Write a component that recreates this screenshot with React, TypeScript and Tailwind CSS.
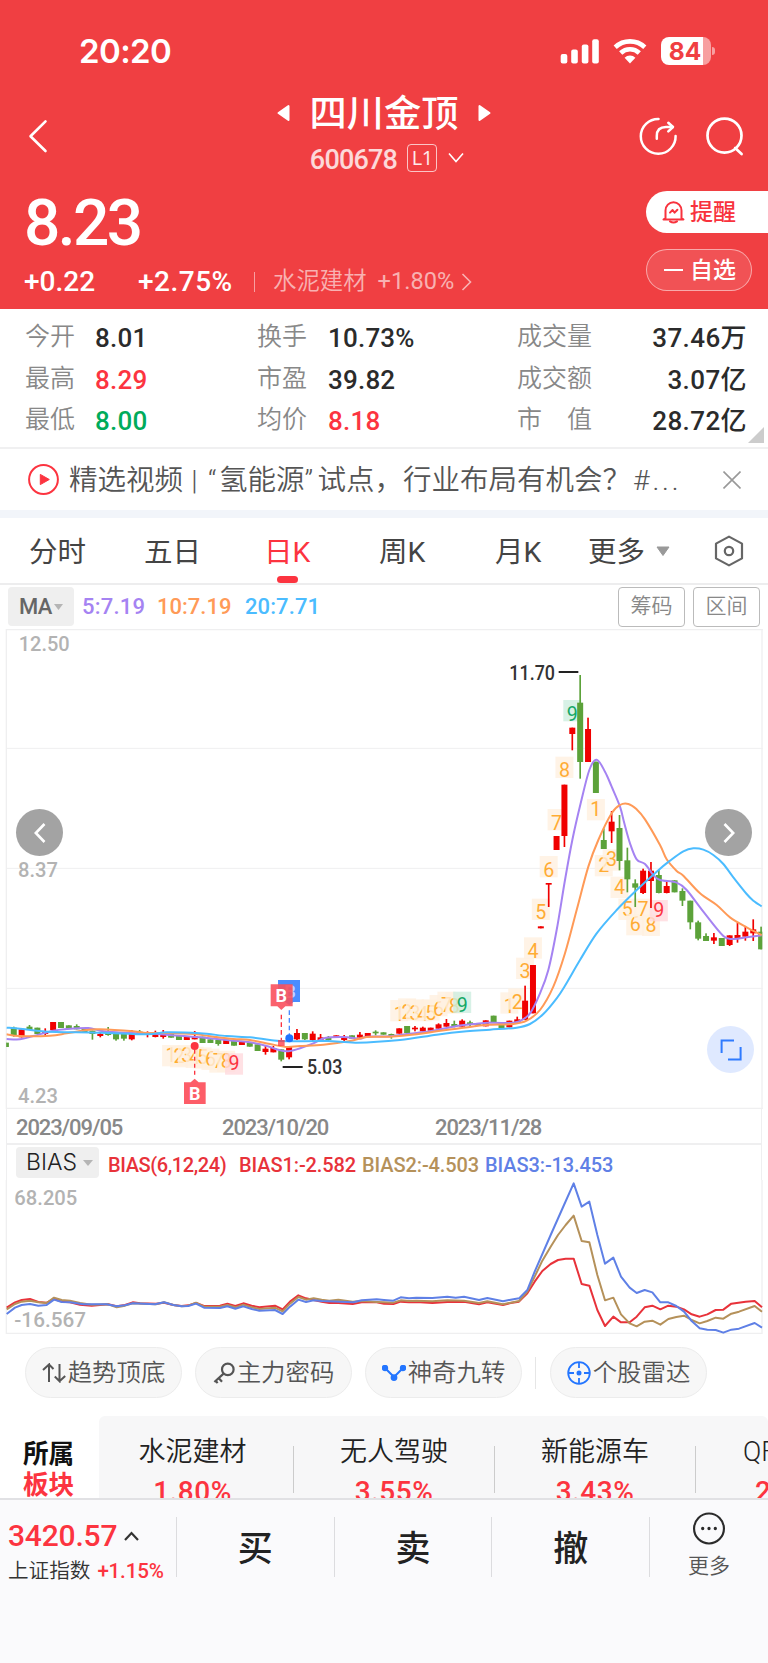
import { Fragment } from "react";
import type { ReactNode } from "react";

type Point = [number, number];
// index, high, body top, body bottom, low, colour
type Candle = [number, number, number, number, number, "r" | "g"];
type Badge = [string, number, number, "up" | "down"];

const RED = "#fc3440";
const CANDLE_RED = "#f00000";
const CANDLE_GREEN = "#5ca23a";

// The charts are drawn in 3x units, one css pixel is three of them.
const candleX = (i: number) => 17.7 + 23.6 * i;

const at = (dx: number, dy: number, points: Point[]): Point[] =>
  points.map(([x, y]) => [x + dx, y + dy]);

const lower = (dy: number, rows: Candle[]): Candle[] =>
  rows.map(([i, h, t, b, l, c]) => [i, h + dy, t + dy, b + dy, l + dy, c]);

const candles: Candle[] = [
  ...lower(993, [
    [0, 248, 248, 261, 261, "g"], [1, 200, 203, 226, 230, "g"], [2, 208, 208, 232, 232, "r"],
    [3, 195, 200, 210, 210, "g"], [4, 203, 203, 222, 222, "g"], [5, 205, 213, 222, 228, "r"],
    [6, 186, 186, 210, 210, "r"], [7, 186, 186, 204, 204, "g"], [8, 196, 196, 206, 206, "g"],
    [9, 193, 198, 208, 208, "g"], [10, 205, 205, 216, 216, "g"], [11, 212, 212, 222, 239, "g"],
    [12, 218, 222, 228, 232, "r"], [13, 201, 213, 225, 227, "g"], [14, 222, 222, 238, 242, "g"],
    [15, 222, 222, 236, 242, "g"], [16, 210, 222, 238, 241, "r"], [17, 210, 215, 220, 222, "g"],
    [18, 214, 221, 225, 232, "r"], [19, 212, 222, 231, 232, "r"], [20, 210, 218, 231, 236, "r"],
    [21, 222, 222, 233, 233, "g"], [22, 226, 226, 240, 240, "g"], [23, 230, 230, 240, 240, "r"],
    [24, 213, 228, 238, 238, "r"], [25, 230, 230, 249, 249, "g"], [26, 238, 238, 249, 249, "g"],
    [27, 240, 240, 252, 257, "g"], [28, 239, 239, 252, 252, "r"], [29, 243, 243, 257, 257, "g"],
    [30, 243, 243, 255, 255, "r"], [31, 249, 249, 260, 260, "g"], [32, 253, 253, 273, 273, "g"],
    [33, 258, 266, 276, 284, "r"], [34, 258, 264, 277, 277, "r"], [35, 268, 268, 299, 304, "g"],
    [36, 258, 258, 292, 298, "r"], [37, 207, 219, 238, 240, "r"], [38, 219, 219, 238, 240, "g"],
    [39, 214, 221, 240, 244, "r"], [40, 222, 232, 240, 244, "r"], [41, 228, 234, 240, 243, "g"],
    [42, 226, 226, 234, 234, "r"], [43, 225, 234, 240, 246, "r"], [44, 226, 226, 236, 236, "g"],
    [45, 216, 224, 233, 236, "r"], [46, 219, 219, 228, 228, "r"], [47, 211, 215, 220, 226, "g"],
    [48, 217, 217, 224, 224, "g"], [49, 221, 222, 228, 236, "g"], [50, 205, 205, 221, 221, "r"],
    [51, 198, 198, 219, 219, "g"], [52, 198, 203, 208, 214, "r"], [53, 200, 203, 214, 214, "r"],
    [54, 203, 203, 212, 212, "r"], [55, 190, 193, 206, 206, "r"], [56, 177, 189, 200, 200, "r"],
    [57, 182, 192, 198, 202, "g"], [58, 178, 182, 200, 200, "r"], [59, 182, 187, 193, 199, "g"],
    [60, 191, 191, 197, 197, "g"], [61, 181, 181, 199, 199, "r"], [62, 167, 167, 188, 188, "g"],
  ]),
  ...lower(573, [
    [63, 608, 608, 624, 624, "g"], [64, 602, 602, 622, 622, "r"], [65, 590, 598, 606, 606, "r"],
    [66, 497, 542, 600, 600, "r"], [67, 435, 435, 580, 580, "r"], [68, 319, 319, 325, 325, "r"],
    [69, 189, 189, 194, 261, "r"], [70, 48, 48, 90, 90, "r"], [71, -106, -106, 48, 81, "r"],
    [72, -277, -277, -258, -209, "r"], [73, -435, -352, -174, -124, "g"], [74, -307, -273, -174, -174, "r"],
    [75, -175, -175, -81, -81, "g"], [76, 25, 60, 87, 87, "g"], [77, -27, 5, 34, 69, "r"],
    [78, -15, 24, 123, 151, "g"], [79, 83, 121, 178, 217, "g"], [80, 178, 190, 203, 261, "g"],
    [81, 146, 152, 219, 222, "r"], [82, 126, 152, 183, 264, "r"], [83, 150, 165, 219, 220, "g"],
    [84, 186, 198, 219, 220, "r"], [85, 181, 181, 217, 217, "g"], [86, 205, 213, 242, 258, "g"],
    [87, 242, 242, 307, 328, "g"], [88, 302, 307, 356, 361, "g"], [89, 340, 348, 363, 363, "g"],
    [90, 339, 352, 362, 372, "r"], [91, 354, 354, 378, 378, "g"], [92, 346, 346, 375, 378, "r"],
    [93, 309, 345, 354, 368, "r"], [94, 320, 335, 350, 362, "r"], [95, 298, 328, 340, 363, "r"],
    [96, 320, 335, 388, 388, "g"],
  ]),
];

const ma5: Point[] = [
  ...at(0, 993, [[20, 237], [60, 238], [100, 228], [160, 212], [200, 207], [265, 204], [300, 212], [350, 217], [430, 220], [500, 224], [560, 229], [600, 232], [700, 242], [750, 247]]),
  ...at(750, 993, [[50, 258], [80, 268], [110, 274], [140, 268], [190, 250], [225, 234], [280, 231], [330, 236], [350, 230], [420, 229], [470, 222], [540, 214], [620, 198], [680, 191], [720, 188]]),
  ...at(1470, 573, [[0, 608], [60, 609], [90, 603], [120, 580], [150, 520], [175, 450], [200, 330], [225, 180], [247, 60], [272, -50], [298, -150], [320, -181], [345, -145], [365, -100], [390, -40], [403, 10], [420, 70], [440, 118], [465, 132], [490, 165], [510, 180], [560, 188], [590, 210], [640, 275], [700, 348], [730, 357], [770, 352], [815, 346]]),
];

const ma10: Point[] = [
  ...at(0, 993, [[20, 223], [60, 228], [150, 227], [200, 220], [260, 210], [300, 208], [400, 214], [440, 219], [500, 219], [580, 222], [640, 230], [700, 237]]),
  ...at(750, 993, [[0, 240], [60, 252], [110, 261], [150, 258], [220, 254], [300, 243], [350, 231], [420, 230], [500, 223], [560, 214], [620, 206], [680, 198]]),
  ...at(1470, 573, [[0, 614], [70, 612], [110, 602], [150, 570], [190, 500], [225, 400], [260, 270], [295, 140], [325, 60], [365, -20], [390, -45], [415, -48], [440, -32], [465, -2], [510, 75], [530, 118], [560, 153], [580, 167], [630, 220], [680, 255], [720, 292], [770, 322], [815, 345]]),
];

const ma20: Point[] = [
  ...at(0, 993, [[20, 203], [60, 206], [110, 212], [170, 216], [300, 218], [440, 223], [500, 217], [600, 220], [680, 228]]),
  ...at(750, 993, [[0, 232], [60, 240], [110, 244], [230, 243], [320, 248], [450, 240], [560, 224], [650, 214]]),
  ...at(1470, 573, [[0, 629], [80, 623], [120, 612], [160, 582], [200, 535], [225, 497], [270, 420], [320, 340], [380, 270], [440, 210], [500, 155], [540, 122], [580, 94], [610, 85], [640, 89], [670, 105], [700, 132], [730, 172], [770, 222], [790, 242], [815, 259]]),
];

// Nine-turn counters: label, candle index, top edge, side of the candle
const badges: Badge[] = [
  ["1", 21, 1248, "down"], ["2", 22, 1251, "down"], ["3", 23, 1248, "down"], ["4", 24, 1253, "down"],
  ["5", 25, 1255, "down"], ["6", 26, 1259, "down"], ["7", 27, 1267, "down"], ["8", 28, 1265, "down"],
  ["9", 29, 1273, "down"],
  ["1", 50, 1113, "up"], ["2", 51, 1108, "up"], ["3", 52, 1111, "up"], ["4", 53, 1113, "up"],
  ["5", 54, 1111, "up"], ["6", 55, 1098, "up"], ["7", 56, 1088, "up"], ["8", 57, 1090, "up"],
  ["9", 58, 1088, "up"],
  ["1", 64, 1090, "up"], ["2", 65, 1078, "up"], ["3", 66, 986, "up"], ["4", 67, 925, "up"],
  ["5", 68, 809, "up"], ["6", 69, 681, "up"], ["7", 70, 540, "up"], ["8", 71, 383, "up"],
  ["9", 72, 213, "up"],
  ["1", 75, 510, "down"], ["2", 76, 678, "down"], ["3", 77, 661, "down"], ["4", 78, 743, "down"],
  ["5", 79, 809, "down"], ["6", 80, 855, "down"], ["7", 81, 809, "down"], ["8", 82, 857, "down"],
  ["9", 83, 813, "down"],
];

const bias1: Point[] = [
  ...at(0, -120, [[20, 503], [45, 487], [65, 480], [90, 477], [115, 486], [140, 488], [162, 477], [185, 485], [210, 487], [240, 494], [275, 497], [325, 493], [350, 499], [375, 495], [398, 487], [420, 490], [468, 491], [492, 488], [520, 495], [545, 498], [565, 496], [588, 489], [612, 498], [660, 497], [682, 491], [706, 498], [730, 490], [755, 497], [778, 502], [825, 497], [848, 508], [870, 485], [895, 466], [918, 475], [941, 480], [965, 485], [988, 489], [1015, 489], [1058, 492], [1085, 487], [1130, 487]]),
  ...at(1152, -120, [[0, 491], [28, 492], [50, 485], [75, 487], [97, 486], [145, 489], [190, 486], [240, 485], [285, 493], [310, 487], [357, 495], [380, 489], [405, 485], [430, 460], [452, 425], [475, 393], [500, 372], [522, 360], [545, 356], [569, 356], [593, 432], [616, 437], [640, 510], [663, 558], [688, 530], [711, 547], [737, 547], [758, 530], [782, 502], [805, 497], [829, 508], [853, 497], [877, 500], [900, 508], [923, 523], [947, 530], [970, 523], [995, 510], [1018, 509], [1042, 491], [1085, 485], [1112, 483], [1134, 502]]),
];

const bias2: Point[] = [
  ...at(0, -120, [[20, 508], [45, 492], [65, 485], [90, 482], [115, 487], [140, 489], [162, 473], [185, 480], [210, 482], [240, 489], [275, 494], [325, 493], [350, 502], [375, 497], [398, 490], [468, 493], [492, 487], [520, 495], [545, 499], [565, 497], [588, 488], [612, 500], [660, 500], [682, 495], [706, 502], [730, 494], [755, 502], [778, 507], [825, 503], [848, 514], [870, 491], [895, 471], [918, 479], [941, 475], [965, 479], [988, 482], [1015, 479], [1058, 485], [1085, 483], [1130, 486]]),
  ...at(1152, -120, [[0, 487], [28, 488], [50, 481], [75, 483], [97, 482], [145, 484], [190, 481], [240, 482], [285, 489], [310, 484], [357, 493], [380, 488], [405, 483], [430, 455], [452, 410], [475, 362], [500, 320], [522, 285], [545, 255], [569, 227], [593, 303], [616, 307], [640, 405], [663, 481], [688, 473], [711, 523], [737, 550], [758, 559], [782, 545], [805, 542], [829, 554], [853, 537], [877, 531], [900, 527], [923, 540], [947, 550], [970, 543], [995, 533], [1018, 536], [1042, 521], [1065, 515], [1112, 498], [1134, 515]]),
];

const bias3: Point[] = [
  ...at(0, -120, [[20, 522], [45, 503], [65, 495], [90, 492], [115, 497], [140, 495], [162, 479], [185, 486], [210, 487], [250, 493], [320, 493], [350, 499], [375, 496], [398, 490], [465, 493], [492, 487], [520, 495], [545, 499], [565, 498], [588, 491], [612, 503], [660, 504], [682, 499], [706, 506], [730, 499], [755, 507], [778, 512], [825, 510], [848, 522], [870, 500], [895, 479], [918, 486], [941, 481], [965, 483], [1060, 487], [1085, 481], [1130, 478]]),
  ...at(1152, -120, [[0, 480], [28, 482], [50, 472], [75, 475], [97, 473], [145, 474], [190, 470], [215, 473], [240, 470], [285, 480], [310, 474], [357, 484], [380, 479], [405, 475], [430, 450], [452, 395], [500, 285], [540, 195], [569, 130], [593, 200], [616, 185], [640, 285], [663, 371], [688, 353], [711, 410], [737, 443], [758, 459], [782, 450], [805, 457], [829, 487], [853, 487], [877, 498], [900, 515], [923, 543], [947, 565], [970, 569], [995, 570], [1018, 578], [1042, 569], [1065, 566], [1112, 549], [1134, 563]]),
];

// Catmull-Rom spline through the points
function smooth(points: Point[]) {
  let d = `M${points[0][0]} ${points[0][1]}`;
  for (let i = 0; i < points.length - 1; i++) {
    const p0 = points[i - 1] ?? points[i];
    const p1 = points[i];
    const p2 = points[i + 1];
    const p3 = points[i + 2] ?? p2;
    d += `C${p1[0] + (p2[0] - p0[0]) / 6} ${p1[1] + (p2[1] - p0[1]) / 6} ${p2[0] - (p3[0] - p1[0]) / 6} ${p2[1] - (p3[1] - p1[1]) / 6} ${p2[0]} ${p2[1]}`;
  }
  return d;
}

function ChartLabel({ x, y, w, fill, children }: { x: number; y: number; w: number; fill: string; children: ReactNode }) {
  return (
    <text x={x} y={y} textLength={w} lengthAdjust="spacingAndGlyphs" fontSize="60" fontWeight="500" fill={fill}>
      {children}
    </text>
  );
}

function badgeColours(label: string, side: "up" | "down") {
  if (label !== "9") return ["#fff0e0", "#ffa51f"];
  return side === "up" ? ["#cdeee0", "#14a866"] : ["#ffd9dd", RED];
}

function NineBadge({ badge }: { badge: Badge }) {
  const [label, index, top, side] = badge;
  const x = candleX(index);
  const [fill, colour] = badgeColours(label, side);
  return (
    <g>
      <rect x={x - 27} y={top} width="54" height="64" fill={fill} opacity="0.8" />
      <text x={x} y={side === "up" ? top + 62 : top + 51} textAnchor="middle" fontSize="59" fill={colour} opacity={label === "9" ? 1 : 0.9}>
        {label}
      </text>
    </g>
  );
}

function CandleChart() {
  return (
    <svg viewBox="0 0 2304 1440" className="block h-[480px] w-full">
      <g stroke="#efeff0" strokeWidth="4" fill="none">
        <path d="M19 2H2288" />
        <path d="M19 358H2288M19 718H2288M19 1078H2288" strokeWidth="3" />
        <path d="M19 1438H2288" />
        <path d="M19 0V1440M2286 0V1440" />
      </g>
      <ChartLabel x={56} y={65} w={153} fill="#b3b3b3">12.50</ChartLabel>
      <ChartLabel x={54} y={743} w={120} fill="#b3b3b3">8.37</ChartLabel>
      <ChartLabel x={54} y={1423} w={120} fill="#b3b3b3">4.23</ChartLabel>

      {badges.map((badge, i) => (
        <NineBadge key={i} badge={badge} />
      ))}

      <svg x="19" y="0" width="2268" height="1440" viewBox="19 0 2268 1440">
        {candles.map(([i, high, top, bottom, low, colour]) => (
          <g key={i} fill={colour === "r" ? CANDLE_RED : CANDLE_GREEN}>
            <rect x={candleX(i) - 2.5} y={high} width="5" height={low - high} />
            <rect x={candleX(i) - 9} y={top} width="18" height={bottom - top} />
          </g>
        ))}
      </svg>

      <g fill="none" strokeWidth="6" strokeLinejoin="round">
        <path d={smooth(ma5)} stroke="#a583f2" />
        <path d={smooth(ma10)} stroke="#ff9a57" />
        <path d={smooth(ma20)} stroke="#4bbcff" />
      </g>

      {/* Highest and lowest price */}
      <path d="M1676 129H1735M848 1314H908" stroke="#222" strokeWidth="6" />
      <ChartLabel x={1528} y={152} w={137} fill="#333">11.70</ChartLabel>
      <ChartLabel x={921} y={1335} w={106} fill="#333">5.03</ChartLabel>

      {/* Buy marks */}
      <circle cx="584" cy="1251" r="12" fill={RED} />
      <path d="M584 1262V1345" stroke={RED} strokeWidth="4" strokeDasharray="12 9" />
      <path d="M552 1360H572L584 1349L596 1360H617V1425H552Z" fill="#fd5d68" />
      <text x="584" y="1413" textAnchor="middle" fontSize="54" fontWeight="700" fill="#fff">B</text>

      <path d="M868 1144V1220" stroke="#4a8dff" strokeWidth="4" strokeDasharray="14 9" />
      <path d="M844 1157V1233" stroke={RED} strokeWidth="4" strokeDasharray="14 9" />
      <path d="M834 1053H900V1119H880L868 1129L856 1119H834Z" fill="#4a8dff" />
      <text x="870" y="1106" textAnchor="middle" fontSize="54" fontWeight="700" fill="#bcd5ff">B</text>
      <path d="M812 1066H878V1132H856L844 1143L832 1132H812Z" fill="#f9505d" opacity="0.9" />
      <text x="844" y="1119" textAnchor="middle" fontSize="54" fontWeight="700" fill="#fff">B</text>
      <rect x="834" y="1233" width="20" height="18" fill={RED} opacity="0.75" />
      <circle cx="868" cy="1228" r="12" fill="#1f74ff" />
    </svg>
  );
}

function BiasChart() {
  return (
    <svg viewBox="0 0 2304 462" className="block h-[154px] w-full">
      <path d="M19 0V460H2286V0" fill="none" stroke="#efeff0" strokeWidth="4" />
      <ChartLabel x={43} y={76} w={189} fill="#b3b3b3">68.205</ChartLabel>
      <ChartLabel x={43} y={440} w={215} fill="#b3b3b3">-16.567</ChartLabel>
      <g fill="none" strokeWidth="6" strokeLinejoin="round">
        <polyline points={bias1.join(" ")} stroke="#e8323a" />
        <polyline points={bias2.join(" ")} stroke="#b5915a" />
        <polyline points={bias3.join(" ")} stroke="#5f80e6" />
      </g>
    </svg>
  );
}

function StatusBar() {
  return (
    <div className="flex h-[93px] items-center justify-between pt-[9px] pr-[53px] pl-[79px]">
      <span className="font-[Inter] text-[33px] leading-none font-semibold tracking-[-0.6px]">20:20</span>
      <div className="flex items-center">
        <svg width="40" height="25" viewBox="0 0 40 25" fill="currentColor">
          <rect x="0.7" y="15" width="6.6" height="9.4" rx="2" />
          <rect x="11.2" y="10.4" width="6.6" height="14" rx="2" />
          <rect x="21.8" y="5.4" width="6.6" height="19" rx="2" />
          <rect x="32.2" y="0.2" width="6.6" height="24.2" rx="2" />
        </svg>
        <svg className="ml-[13px]" width="34" height="25" viewBox="0 0 34 25" fill="none" stroke="currentColor" strokeWidth="4.6">
          <path d="M2.2 8.2A21.6 21.6 0 0 1 31.8 8.2" />
          <path d="M7.7 14A13.4 13.4 0 0 1 26.3 14" />
          <path d="M17 24.4L11.6 18.8A7.7 7.7 0 0 1 22.4 18.8Z" fill="currentColor" stroke="none" />
        </svg>
        <div className="ml-[14px] flex h-[28px] w-[50px] items-center justify-center overflow-hidden rounded-lg bg-linear-to-r from-white from-84% to-white/50 to-84% pr-0.5 font-[Inter] text-[24.5px] leading-none font-bold text-[#f03f42]">
          84
        </div>
        <div className="ml-[1px] h-[8px] w-[3px] rounded-r-full bg-white/50" />
      </div>
    </div>
  );
}

function Header() {
  return (
    <header className="h-[309px] bg-[#f03f42] text-white">
      <StatusBar />
      <div className="flex h-[91px] justify-between">
        <div className="flex w-[200px] items-center pb-[5px] pl-[28px]">
          <svg width="20" height="34" viewBox="0 0 20 34" fill="none" stroke="currentColor" strokeWidth="2.6" strokeLinecap="round" strokeLinejoin="round">
            <path d="M17.5 2.4L2.5 17.2L17.5 32" />
          </svg>
        </div>
        <div className="flex flex-col items-center">
          <div className="flex h-[39px] items-center gap-[20px]">
            <svg width="13" height="18" viewBox="0 0 13 18" fill="currentColor" stroke="currentColor" strokeWidth="2" strokeLinejoin="round">
              <path d="M11.5 2V16L1.5 9Z" />
            </svg>
            <h1 className="pt-[4px] text-[37.2px] leading-none font-medium">四川金顶</h1>
            <svg width="13" height="18" viewBox="0 0 13 18" fill="currentColor" stroke="currentColor" strokeWidth="2" strokeLinejoin="round">
              <path d="M1.5 2V16L11.5 9Z" />
            </svg>
          </div>
          <div className="flex h-[52px] items-center pl-[6px]">
            <span className="pt-[4px] text-[27px] leading-none font-medium tracking-[-0.8px] text-white/80">600678</span>
            <span className="ml-[10px] flex h-7 w-[30px] items-center justify-center rounded-[4px] border border-white/70 font-['Open_Sans'] text-[20px] leading-none tracking-[-0.5px] text-white/90">
              L1
            </span>
            <svg className="ml-[11px]" width="16" height="12" viewBox="0 0 16 12" fill="none" stroke="currentColor" strokeWidth="1.6">
              <path d="M1 1.5L8 9.5L15 1.5" />
            </svg>
          </div>
        </div>
        <div className="flex w-[200px] items-center justify-end gap-[28px] pr-[24px] pb-[5px]">
          <svg width="40" height="40" viewBox="0 0 40 40" fill="none" stroke="currentColor" strokeWidth="2.5" strokeLinecap="round" strokeLinejoin="round">
            <path d="M20.5 3A17.4 17.4 0 1 0 37.6 20" />
            <path d="M18.8 22.8V20C18.8 14 22.5 11 28 11H34.8" />
            <path d="M30.3 6.8L35 11L30.3 15.4" />
          </svg>
          <svg width="38" height="40" viewBox="0 0 38 40" fill="none" stroke="currentColor" strokeWidth="2.7" strokeLinecap="round">
            <circle cx="18.5" cy="19.6" r="17" />
            <path d="M29.2 32L35.6 38" />
          </svg>
        </div>
      </div>

      <div className="flex justify-between">
        <div className="pl-[24px]">
          <div className="flex h-[77px] items-center pt-[2px] text-[64px] leading-none font-medium tracking-[-2.6px]">8.23</div>
          <div className="flex h-[41px] items-center text-[28px] leading-none font-medium">
            <span className="w-[114px]">+0.22</span>
            <span className="w-[116px] tracking-[0.5px]">+2.75%</span>
            <span className="h-5 w-px bg-white/50" />
            <span className="ml-[18px] text-[23.4px] font-[350] text-white/60">水泥建材</span>
            <span className="ml-[11px] text-[23.6px] font-normal text-white/60">+1.80%</span>
            <svg className="ml-[7px] text-white/60" width="11" height="18" viewBox="0 0 11 18" fill="none" stroke="currentColor" strokeWidth="1.6">
              <path d="M1.5 1L9.5 9L1.5 17" />
            </svg>
          </div>
        </div>
        <div className="flex w-[122px] flex-col gap-[16px] pt-[7px] text-[23px] leading-none font-medium">
          <div className="flex h-[42px] items-center gap-[5px] rounded-l-full bg-white pl-[16px] text-[#f8323d]">
            <svg width="23" height="24" viewBox="0 0 23 24" fill="none" stroke="currentColor" strokeWidth="2" strokeLinecap="round" strokeLinejoin="round">
              <path d="M3.5 18V10.5A8 8.3 0 0 1 19.5 10.5V18L21.5 19.5H1.5Z" />
              <path d="M8 21.3Q11.5 23.6 15 21.3" />
              <path d="M8 12.6L10.6 10L12.6 12.6L15.4 9.8" />
            </svg>
            <span className="pt-[1px]">提醒</span>
          </div>
          <div className="flex h-[42px] w-[106px] items-center gap-[7px] rounded-full border border-white/50 bg-white/10 pl-[17px]">
            <span className="h-[2px] w-[19px] bg-white" />
            <span className="pt-[1px]">自选</span>
          </div>
        </div>
      </div>
    </header>
  );
}

const stats = [
  ["今开", "8.01", "换手", "10.73%", "成交量", "37.46万"],
  ["最高", "8.29", "市盈", "39.82", "成交额", "3.07亿"],
  ["最低", "8.00", "均价", "8.18", "市　值", "28.72亿"],
];

function valueColour(value: string) {
  if (value === "8.29" || value === "8.18") return "text-[#fc3440]";
  if (value === "8.00") return "text-[#00ab5b]";
  return "text-[#2b2b2b]";
}

function Stats() {
  return (
    <section className="relative h-[140px] border-b-2 border-[#f0f0f1] pt-[7px]">
      {stats.map((row) => (
        <div key={row[0]} className="flex h-[41.5px] items-center text-[26px] leading-none font-medium tracking-[0.2px]">
          <span className="w-[95px] pl-[25px] text-[25px] font-[350] tracking-normal text-[#888]">{row[0]}</span>
          <span className={`w-[162px] pt-[3px] ${valueColour(row[1])}`}>{row[1]}</span>
          <span className="w-[71px] text-[25px] font-[350] tracking-normal text-[#888]">{row[2]}</span>
          <span className={`w-[189px] pt-[3px] ${valueColour(row[3])}`}>{row[3]}</span>
          <span className="text-[25px] font-[350] tracking-normal text-[#888]">{row[4]}</span>
          <span className="flex-1 pt-[3px] pr-[21px] text-right tracking-[0.4px] text-[#2b2b2b]">{row[5]}</span>
        </div>
      ))}
      <svg className="absolute right-[4px] bottom-[4px]" width="16" height="16" viewBox="0 0 16 16">
        <path d="M16 0V16H0Z" fill="#ccc" />
      </svg>
    </section>
  );
}

function NewsBar() {
  return (
    <section className="flex h-[69px] items-center border-b-8 border-[#f2f5fa] pt-[4px] pl-[28px] text-[28.5px] leading-none font-[350] text-[#555]">
      <svg className="mb-[4px]" width="31" height="31" viewBox="0 0 31 31">
        <circle cx="15.5" cy="15.5" r="14.4" fill="none" stroke={RED} strokeWidth="2" />
        <path d="M12.3 10.4V20.6L21.3 15.5Z" fill={RED} stroke={RED} strokeLinejoin="round" />
      </svg>
      <span className="ml-[10px]">精选视频</span>
      <span className="w-[23px] text-center">|</span>
      <span className="w-[13px] pl-[2px]">“</span>
      <span>氢能源</span>
      <span className="w-[13px]">”</span>
      <span>试点，行业布局有机会？</span>
      <span className="ml-[2px] tracking-[2.8px]">#...</span>
      <svg className="mr-[27px] mb-[4px] ml-auto" width="18" height="18" viewBox="0 0 18 18" stroke="#999" strokeWidth="1.6">
        <path d="M0.5 0.5L17.5 17.5M17.5 0.5L0.5 17.5" />
      </svg>
    </section>
  );
}

function Tabs() {
  return (
    <nav className="flex h-[67px] items-center border-b-2 border-[#ededee] pt-[5px] pl-[29px] text-[28.5px] leading-none text-[#444]">
      <span className="w-[115px]">分时</span>
      <span className="w-[120px]">五日</span>
      <span className="relative flex h-full w-[115px] items-center text-[#fc3440]">
        日K
        <span className="absolute bottom-0 left-[13px] h-[7px] w-[21px] rounded-full bg-[#fc3440]" />
      </span>
      <span className="w-[116px]">周K</span>
      <span className="w-[93px]">月K</span>
      <span>更多</span>
      <svg className="mb-[3px] ml-[11px]" width="14" height="11" viewBox="0 0 14 11">
        <path d="M1 1H13L7 9.5Z" fill="#999" stroke="#999" strokeLinejoin="round" />
      </svg>
      <svg className="mr-[24px] mb-[5px] ml-auto" width="30" height="32" viewBox="0 0 30 32" fill="none" stroke="#666" strokeWidth="2.2" strokeLinejoin="round">
        <path d="M15 1.6L28 8.6V23.4L15 30.4L2 23.4V8.6Z" />
        <circle cx="15" cy="16" r="4.2" />
      </svg>
    </nav>
  );
}

function MaRow() {
  return (
    <div className="flex h-[44px] items-center pr-[8px] pb-[1px] pl-[8px] text-[22px] leading-none font-medium">
      <span className="flex h-[39px] w-[66px] items-center rounded-[4px] bg-[#efefef] pl-[11px] tracking-[-0.8px] text-[#666]">
        MA
        <svg className="ml-[3px]" width="9" height="6" viewBox="0 0 9 6">
          <path d="M0 0H9L4.5 6Z" fill="#b5b5b5" />
        </svg>
      </span>
      <span className="w-[75px] pl-[8px] tracking-[0.2px] text-[#a583f2]">5:7.19</span>
      <span className="w-[88px] pl-[8px] text-[#ff9a57]">10:7.19</span>
      <span className="pl-[8px] tracking-[0.1px] text-[#4bbcff]">20:7.71</span>
      <div className="ml-auto flex gap-2 text-[21px] font-[350] text-[#888]">
        <span className="flex h-10 w-[67px] items-center justify-center rounded-[4px] border border-[#bbb]">筹码</span>
        <span className="flex h-10 w-[67px] items-center justify-center rounded-[4px] border border-[#bbb]">区间</span>
      </div>
    </div>
  );
}

function ChartArea() {
  return (
    <section className="relative">
      <CandleChart />
      <div className="mx-[6px] flex h-[36px] items-center border-x border-b-2 border-[#efeff0] pt-[3px] pl-[9px] text-[22px] leading-none font-medium tracking-[-1.1px] text-[#888]">
        <span className="w-[206px]">2023/09/05</span>
        <span className="w-[213px]">2023/10/20</span>
        <span>2023/11/28</span>
      </div>
      <div className="mx-[6px] flex h-[35px] items-center border-x border-[#efeff0] pl-[9px] text-[20px] leading-none font-medium">
        <span className="flex h-[31px] w-[83px] items-center rounded-[4px] bg-[#efefef] pl-[10px] font-[Inter] text-[23px] font-light text-[#222]">
          BIAS
          <svg className="ml-[6px]" width="10" height="6" viewBox="0 0 10 6">
            <path d="M0 0H10L5 6Z" fill="#b5b5b5" />
          </svg>
        </span>
        <span className="w-[131px] pt-[4px] pl-[9px] tracking-[-0.4px] text-[#e8323a]">BIAS(6,12,24)</span>
        <span className="w-[123px] pt-[4px] pl-[9px] tracking-[-0.1px] text-[#e8323a]">BIAS1:-2.582</span>
        <span className="w-[123px] pt-[4px] pl-[9px] tracking-[-0.1px] text-[#b5915a]">BIAS2:-4.503</span>
        <span className="pt-[4px] pl-[9px] tracking-[-0.1px] text-[#5f80e6]">BIAS3:-13.453</span>
      </div>
      <BiasChart />

      <button className="absolute top-[180px] left-[16px] flex size-[47px] items-center justify-center rounded-full bg-[#a3a3a3]">
        <svg width="12" height="20" viewBox="0 0 12 20" fill="none" stroke="#fff" strokeWidth="2.6">
          <path d="M10.5 1L1.8 10L10.5 19" />
        </svg>
      </button>
      <button className="absolute top-[180px] right-[16px] flex size-[47px] items-center justify-center rounded-full bg-[#a3a3a3]">
        <svg width="12" height="20" viewBox="0 0 12 20" fill="none" stroke="#fff" strokeWidth="2.6">
          <path d="M1.5 1L10.2 10L1.5 19" />
        </svg>
      </button>
      <button className="absolute top-[397px] right-[14px] flex size-[47px] items-center justify-center rounded-full bg-[#dfe9ff]">
        <svg width="22" height="22" viewBox="0 0 22 22" fill="none" stroke="#2f7bff" strokeWidth="2">
          <path d="M14 1.6H1.6V14M20.6 8V20.6H8" />
        </svg>
      </button>
    </section>
  );
}

function ToolPill({ label, icon }: { label: string; icon: ReactNode }) {
  return (
    <span className="flex h-[51px] w-[157px] items-center justify-center gap-[2px] rounded-full border border-[#ececec] bg-[#f7f7f7] text-[24.4px] leading-none font-[350] text-[#555]">
      {icon}
      <span className="pt-[2px]">{label}</span>
    </span>
  );
}

function Tools() {
  return (
    <section className="flex h-[82px] items-center gap-[13px] pb-[5px] pl-[25px]">
      <ToolPill
        label="趋势顶底"
        icon={
          <svg width="24" height="20" viewBox="0 0 24 20" fill="none" stroke="#555" strokeWidth="2">
            <path d="M1 7L7 1.5V19M7 1.5L11.5 6M17.5 1V18.2L12.8 13.5M17.5 18.2L23.2 13" />
          </svg>
        }
      />
      <ToolPill
        label="主力密码"
        icon={
          <svg width="22" height="22" viewBox="0 0 22 22" fill="none" stroke="#555" strokeWidth="2.2">
            <circle cx="14.8" cy="7.4" r="5.8" />
            <path d="M10.6 11.6L1.4 20M5.6 16L9 19.8M2.6 18.6L4.6 21.2" />
          </svg>
        }
      />
      <ToolPill
        label="神奇九转"
        icon={
          <svg width="24" height="16" viewBox="0 0 24 16" fill="#2476ff" stroke="#2476ff" strokeWidth="2">
            <path d="M3 3L12 12L21 3" fill="none" />
            <circle cx="3" cy="3" r="2.2" />
            <circle cx="12" cy="12.6" r="2.4" />
            <circle cx="21" cy="3" r="2.2" />
          </svg>
        }
      />
      <span className="mr-px h-8 w-px bg-[#e6e6e6]" />
      <ToolPill
        label="个股雷达"
        icon={
          <svg width="24" height="24" viewBox="0 0 24 24" fill="none" stroke="#2476ff" strokeWidth="1.8">
            <circle cx="12" cy="12" r="10.8" />
            <path d="M12 1V7M12 17V23M1 12H7M17 12H23" />
            <circle cx="12" cy="12" r="1.6" fill="#2476ff" />
          </svg>
        }
      />
    </section>
  );
}

const sectors = [
  ["水泥建材", "1.80%"],
  ["无人驾驶", "3.55%"],
  ["新能源车", "3.43%"],
];

function Sectors() {
  return (
    <section className="flex h-[82px] overflow-hidden">
      <div className="w-[99px] pt-[23px] pl-[23px] text-[25.6px] leading-[30.5px] font-bold text-[#111]">
        <p>所属</p>
        <p className="text-[#fc3440]">板块</p>
      </div>
      <div className="flex h-[120px] w-[669px] shrink-0 overflow-hidden rounded-t-md bg-[#f7f7f8]">
        {sectors.map(([name, change], i) => (
          <Fragment key={name}>
            <div className={`flex shrink-0 flex-col items-center pt-[22px] ${i === 0 ? "w-[194px] pr-[7px]" : "w-[200px]"}`}>
              <span className="text-[27px] leading-[28px] font-[350] text-[#222]">{name}</span>
              <span className="mt-[10px] text-[28px] leading-[32px] font-medium tracking-[0.5px] text-[#fc3440]">{change}</span>
            </div>
            <span className="mt-[30px] h-[47px] w-px shrink-0 bg-[#ccc]" />
          </Fragment>
        ))}
        <div className="flex shrink-0 flex-col pt-[22px] pl-[47px]">
          <span className="text-[27px] leading-[28px] font-[350] text-[#222]">QF</span>
          <span className="mt-[10px] pl-[12px] text-[28px] leading-[32px] font-medium text-[#fc3440]">2</span>
        </div>
      </div>
    </section>
  );
}

function BottomBar() {
  return (
    <footer className="flex h-[165px] items-start border-t-2 border-[#e1e1e4] bg-[#fafafc]">
      <div className="w-[176px] pt-[19px] pl-[8px]">
        <div className="flex h-[34px] items-center text-[30px] leading-none font-medium tracking-[-0.2px] text-[#fc3440]">
          3420.57
          <svg className="ml-[7px]" width="15" height="10" viewBox="0 0 15 10" fill="none" stroke="#333" strokeWidth="2.2">
            <path d="M1 9L7.5 2L14 9" />
          </svg>
        </div>
        <div className="flex h-[37px] items-center text-[20.6px] leading-none">
          <span className="font-[350] text-[#333]">上证指数</span>
          <span className="ml-[7px] font-medium tracking-[-0.2px] text-[#fc3440]">+1.15%</span>
        </div>
      </div>
      {["买", "卖", "撤"].map((action) => (
        <div key={action} className="mt-[17px] flex h-[60px] w-[157.7px] items-center justify-center border-l border-[#dcdcdf] pt-[4px] text-[35px] leading-none font-medium text-[#222]">
          {action}
        </div>
      ))}
      <div className="mt-[17px] flex h-[60px] flex-1 border-l border-[#dcdcdf]">
        <div className="-mt-[5px] flex w-full flex-col items-center">
          <svg width="34" height="34" viewBox="0 0 34 34" fill="none" stroke="#2b2b2b" strokeWidth="2.2">
            <circle cx="17" cy="17" r="15.4" />
            <path d="M10.5 17H10.51M17 17H17.01M23.5 17H23.51" strokeWidth="3.4" strokeLinecap="round" />
          </svg>
          <span className="mt-[11px] text-[21px] leading-none font-[350] text-[#555]">更多</span>
        </div>
      </div>
    </footer>
  );
}

export default function App() {
  return (
    <main className="h-[1663px] w-[768px] overflow-hidden bg-white font-[Roboto,'Noto_Sans_CJK_SC',sans-serif]">
      <Header />
      <Stats />
      <NewsBar />
      <Tabs />
      <MaRow />
      <ChartArea />
      <Tools />
      <Sectors />
      <BottomBar />
    </main>
  );
}
